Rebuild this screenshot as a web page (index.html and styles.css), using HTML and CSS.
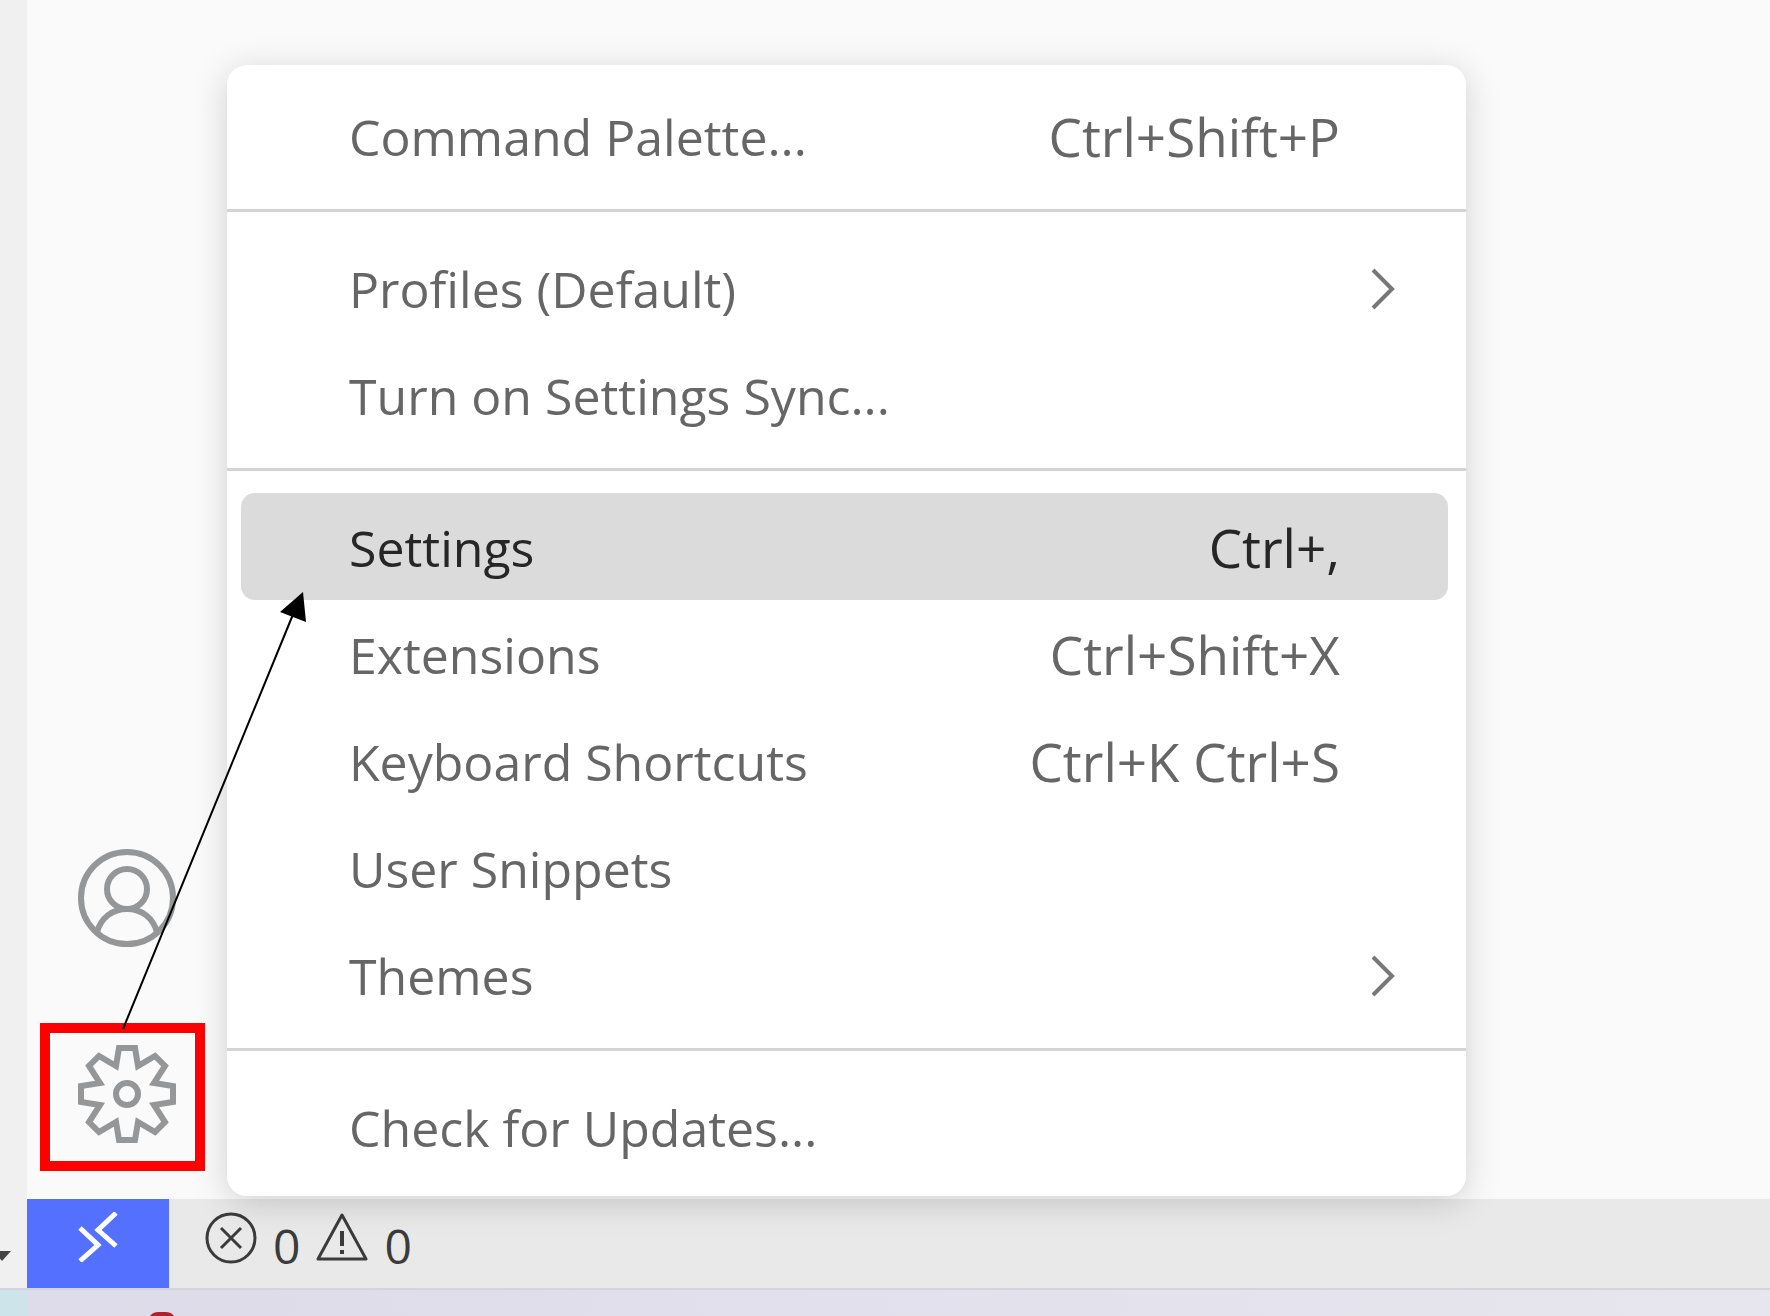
FILE: index.html
```
<!DOCTYPE html>
<html lang="en">
<head>
  <meta charset="UTF-8">
  <title>Manage menu</title>
  <link rel="stylesheet" href="styles.css">
</head>
<body>

<div class="screen">
  <div class="outer-strip">
    <svg class="caret" width="12" height="12" viewBox="0 0 12 12"><path d="M-6 1H11L2 11Z" fill="#444"/></svg>
  </div>

  <div class="window">
    <div class="workspace">
      <nav class="activity-bar">
        <button type="button" class="activity-btn" aria-label="Accounts">
          <svg width="100" height="100" viewBox="-50 -50 100 100" fill="none" stroke="#949698" stroke-width="6">
            <circle r="46"/>
            <circle cy="-9" r="20"/>
            <path d="M-30 34C-26 20 -15 11 0 11S26 20 30 34"/>
          </svg>
        </button>
        <button type="button" class="activity-btn" aria-label="Manage">
          <svg width="100" height="100" viewBox="-50 -50 100 100" fill="none" stroke="#949698" stroke-width="6">
            <path d="M-8 -46H8L11 -28L28 -38L38 -28L27 -11L46 -8V8L27 11L38 28L28 38L11 28L8 46H-8L-11 28L-28 38L-38 28L-27 11L-46 8V-8L-27 -11L-38 -28L-28 -38L-11 -28Z"/>
            <circle r="11"/>
          </svg>
        </button>
      </nav>

      <div class="menu">
        <button type="button" class="menu-item"><span>Command Palette...</span><span class="keys">Ctrl+Shift+P</span></button>
        <hr class="separator">
        <button type="button" class="menu-item">
          <span>Profiles (Default)</span>
          <svg class="chevron" width="26" height="42" viewBox="0 0 26 42"><path d="M3 2L22 21L3 40"/></svg>
        </button>
        <button type="button" class="menu-item"><span>Turn on Settings Sync...</span></button>
        <hr class="separator">
        <button type="button" class="menu-item active"><span>Settings</span><span class="keys">Ctrl+,</span></button>
        <button type="button" class="menu-item"><span>Extensions</span><span class="keys">Ctrl+Shift+X</span></button>
        <button type="button" class="menu-item"><span>Keyboard Shortcuts</span><span class="keys">Ctrl+K Ctrl+S</span></button>
        <button type="button" class="menu-item"><span>User Snippets</span></button>
        <button type="button" class="menu-item">
          <span>Themes</span>
          <svg class="chevron" width="26" height="42" viewBox="0 0 26 42"><path d="M3 2L22 21L3 40"/></svg>
        </button>
        <hr class="separator">
        <button type="button" class="menu-item"><span>Check for Updates...</span></button>
      </div>

      <!-- red box round the gear and arrow to Settings -->
      <svg class="callout" width="320" height="620" viewBox="0 0 320 620">
        <rect x="18" y="449" width="155" height="138" fill="none" stroke="#f00" stroke-width="10"/>
        <path d="M96 450L267 33" stroke="#000" stroke-width="2"/>
        <path d="M276 13L253 33L279 43Z"/>
      </svg>
    </div>

    <footer class="status-bar">
      <button type="button" class="remote" aria-label="Open a remote window">
        <svg width="40" height="50" viewBox="0 0 40 50" fill="none" stroke="#fff" stroke-width="5">
          <path d="M2 16L20 33L2 49M38 1L20 18L38 34"/>
        </svg>
      </button>
      <button type="button" class="problems">
        <svg width="52" height="52" viewBox="0 0 52 52" fill="none" stroke="#3b3b3b" stroke-width="3">
          <circle cx="26" cy="26" r="24"/>
          <path d="M16 16L36 36M36 16L16 36"/>
        </svg>
        <span>0</span>
        <svg width="52" height="52" viewBox="0 0 52 52" fill="none" stroke="#3b3b3b" stroke-width="3" stroke-linejoin="round">
          <path d="M26 3L50 47H2Z"/>
          <path d="M26 19V34M26 38V42" stroke-width="4"/>
        </svg>
        <span>0</span>
      </button>
    </footer>
  </div>
</div>

<div class="desktop">
  <svg class="badge" width="24" height="4" viewBox="0 0 24 4"><path d="M0 4C3 0 6 0 12 0S21 0 24 4Z" fill="#b3202c"/></svg>
</div>

</body>
</html>
```

FILE: styles.css
```
* {
  box-sizing: border-box;
}
body {
  margin: 0;
  height: 100vh;
  display: flex;
  flex-direction: column;
  overflow: hidden;
  font-family: "Open Sans", "Noto Sans", sans-serif;
  background: #fafafa;
}
button {
  border: none;
  padding: 0;
  background: none;
  font: inherit;
  color: inherit;
  cursor: pointer;
}
svg {
  display: block;
  flex-shrink: 0;
}
.screen {
  flex: 1;
  display: flex;
}
.outer-strip {
  width: 27px;
  background: #f0f0f0;
  display: flex;
  align-items: flex-end;
  padding-bottom: 26px;
}
.window {
  flex: 1;
  display: flex;
  flex-direction: column;
}
.workspace {
  flex: 1;
  position: relative;
  display: flex;
}
.activity-bar {
  width: 200px;
  display: flex;
  flex-direction: column;
  justify-content: flex-end;
  align-items: center;
  gap: 96px;
  padding-bottom: 55px;
}

/* popup menu */
.menu {
  position: absolute;
  left: 200px;
  bottom: 3px;
  width: 70vw;
  padding: 17px 0 16px;
  background: #fff;
  border-radius: 20px;
  box-shadow: 0 6px 34px rgba(0, 0, 0, 0.17);
  color: #666;
  font-size: 50px;
}
.menu-item {
  width: calc(100% - 32px);
  height: 107px;
  margin: 0 18px 0 14px;
  padding: 2px 108px 0;
  display: flex;
  align-items: center;
  justify-content: space-between;
  border-radius: 14px;
  line-height: 68px;
  text-align: left;
  white-space: nowrap;
}
.menu-item.active {
  background: #dbdbdb;
  color: #262626;
}
.keys {
  font-size: 53px;
}
.separator {
  height: 3px;
  margin: 20px 0 22px;
  border: none;
  background: #d4d4d4;
}
.chevron {
  margin-right: -56px;
  fill: none;
  stroke: #777;
  stroke-width: 4;
}
.callout {
  position: absolute;
  left: 0;
  bottom: 0;
}

/* status bar */
.status-bar {
  height: 89px;
  display: flex;
  background: #e9e9e9;
  color: #3b3b3b;
  font-size: 48px;
}
.remote {
  width: 142px;
  display: flex;
  justify-content: center;
  padding-top: 13px;
  background: #5470ff;
}
.problems {
  display: flex;
  align-items: flex-start;
  gap: 16px;
  padding: 13px 36px 0;
  line-height: 68px;
}
.desktop {
  height: 28px;
  padding: 22px 0 0 150px;
  border-top: 2px solid #d6d3e0;
  background: linear-gradient(to right, #cde4eb 27px, #dedbea 27px, #e7e6ee);
}
```
